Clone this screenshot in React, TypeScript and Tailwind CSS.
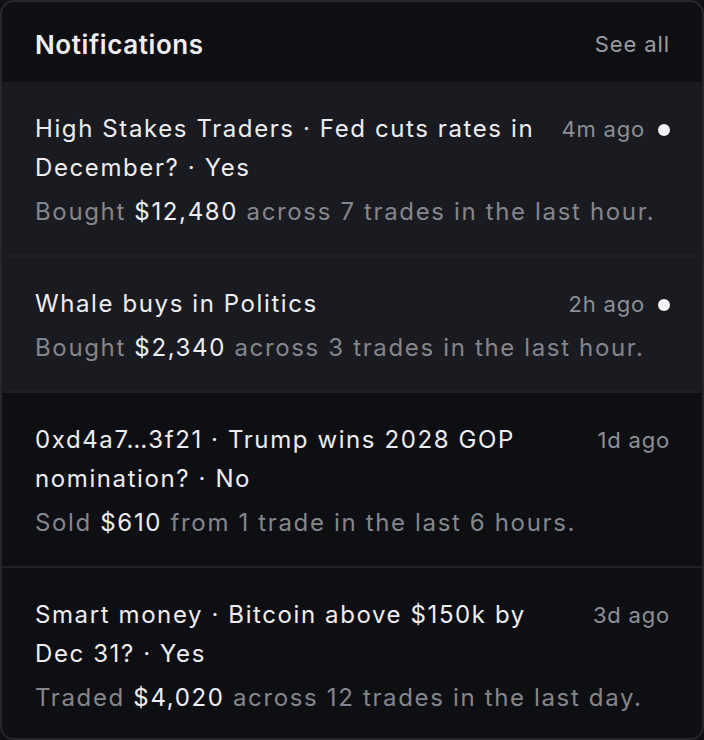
import React from "react";

type Item = {
  title: string;
  time: string;
  unread: boolean;
  verb: string;
  amount: string;
  rest: string;
};

const items: Item[] = [
  {
    title: "High Stakes Traders · Fed cuts rates in December? · Yes",
    time: "4m ago",
    unread: true,
    verb: "Bought",
    amount: "$12,480",
    rest: "across 7 trades in the last hour.",
  },
  {
    title: "Whale buys in Politics",
    time: "2h ago",
    unread: true,
    verb: "Bought",
    amount: "$2,340",
    rest: "across 3 trades in the last hour.",
  },
  {
    title: "0xd4a7…3f21 · Trump wins 2028 GOP nomination? · No",
    time: "1d ago",
    unread: false,
    verb: "Sold",
    amount: "$610",
    rest: "from 1 trade in the last 6 hours.",
  },
  {
    title: "Smart money · Bitcoin above $150k by Dec 31? · Yes",
    time: "3d ago",
    unread: false,
    verb: "Traded",
    amount: "$4,020",
    rest: "across 12 trades in the last day.",
  },
];

export default function App() {
  return (
    <div
      className="w-[704px] h-[740px] bg-[#0e0f13]"
      style={{ fontFamily: "Inter, 'Noto Sans', sans-serif" }}
    >
      <div className="h-full flex flex-col rounded-[14px] border-2 border-[#26272c] bg-[#0e0f13] overflow-hidden">
        <div className="h-[80px] shrink-0 flex items-center justify-between pl-[33px] pr-[32px] pt-[4px]">
          <span className="text-[26px] font-semibold text-[#eeeef1] tracking-[0.6px]">
            Notifications
          </span>
          <span className="text-[22px] text-[#9a9ba1] tracking-[0.9px]">
            See all
          </span>
        </div>
        <div className="flex flex-col">
          {items.map((it, i) => (
            <div
              key={i}
              className={`flex flex-col gap-[5px] pl-[33px] pr-[32px] pt-[27px] pb-[23px] ${
                it.unread ? "bg-[#1a1b20]" : "bg-[#0e0f13]"
              } ${i === items.length - 1 ? "" : "border-b-2 border-[#202126]"}`}
            >
              <div className="flex items-start gap-[24px]">
                <div className="flex-1 text-[24px] leading-[39px] tracking-[1.6px] text-[#eeeef1]">
                  {it.title}
                </div>
                <div className="flex items-center gap-[13px] h-[39px] pt-[2px] shrink-0">
                  <span className="text-[22px] leading-[39px] tracking-[0.8px] text-[#8e8f95]">
                    {it.time}
                  </span>
                  {it.unread && (
                    <span className="w-[12px] h-[12px] rounded-full bg-[#f4f4f6]" />
                  )}
                </div>
              </div>
              <div className="text-[24px] leading-[40px] tracking-[1.65px] text-[#85868c]">
                {it.verb} <span className="text-[#eeeef1]">{it.amount}</span>{" "}
                {it.rest}
              </div>
            </div>
          ))}
        </div>
      </div>
    </div>
  );
}
